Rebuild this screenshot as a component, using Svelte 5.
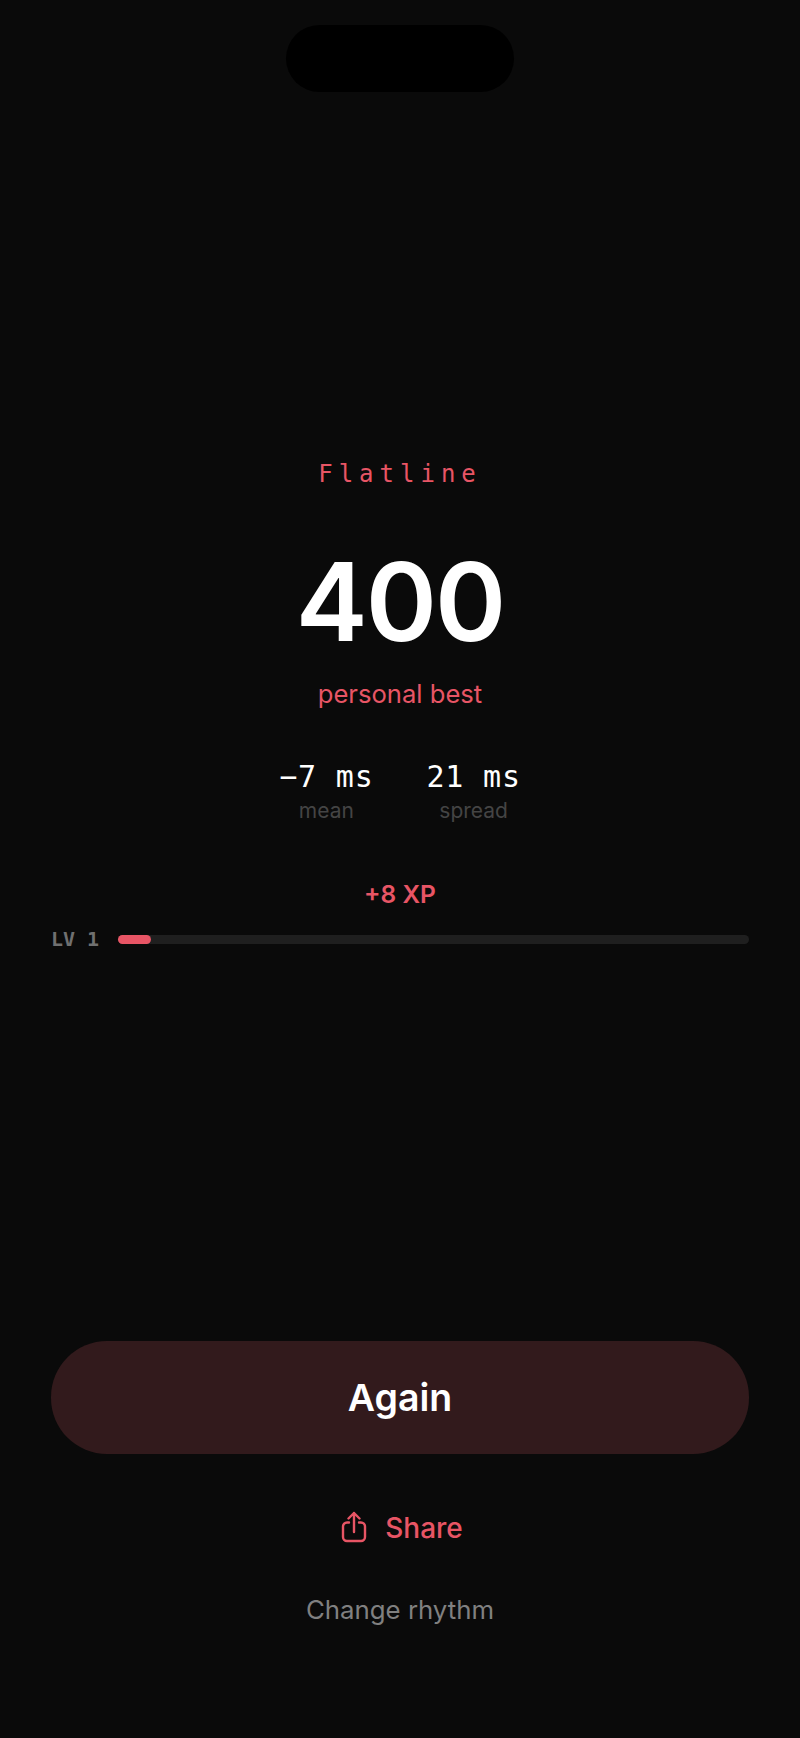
<script>
	const stats = [
		{ value: "−7 ms", label: "mean" },
		{ value: "21 ms", label: "spread" },
	];
	let xp = 8;
	let level = 1;
	let progress = 5.2;
</script>

<div class="screen">
	<div class="island"></div>

	<section class="result">
		<h2 class="rhythm">Flatline</h2>
		<div class="score">400</div>
		<p class="best">personal best</p>

		<div class="stats">
			{#each stats as { value, label } (label)}
				<div class="stat">
					<span class="value">{value}</span>
					<span class="label">{label}</span>
				</div>
			{/each}
		</div>

		<div class="xp">+{xp} XP</div>
		<div class="level">
			<span class="lv">LV {level}</span>
			<div class="track"><div class="fill" style="width: {progress}%"></div></div>
		</div>
	</section>

	<footer class="actions">
		<button class="again">Again</button>
		<button class="share">
			<svg class="icon" viewBox="0 0 26 32" fill="none" stroke="currentColor" stroke-width="2.4" stroke-linecap="round" stroke-linejoin="round">
				<path d="M8 11.500H6a4 4 0 0 0-4 4V26a4 4 0 0 0 4 4h14a4 4 0 0 0 4-4V15.500a4 4 0 0 0-4-4h-2" />
				<path d="M13 21V2M7.500 7.500 13 2l5.500 5.500" />
			</svg>
			<span>Share</span>
		</button>
		<button class="change">Change rhythm</button>
	</footer>
</div>

<style>
	:global(body) {
		background: #0a0a0a;
	}
	.screen {
		position: relative;
		display: flex;
		flex-direction: column;
		height: 1738px;
		box-sizing: border-box;
		padding: 0 51px;
		background: #0a0a0a;
		color: #fff;
		font-family: Inter, "Noto Sans", sans-serif;
		overflow: hidden;
	}
	.island {
		position: absolute;
		top: 25px;
		left: 286px;
		width: 228px;
		height: 67px;
		border-radius: 34px;
		background: #000;
	}
	.result {
		display: flex;
		flex-direction: column;
		align-items: center;
		padding-top: 458px;
	}
	.rhythm {
		margin: 0;
		font-family: "DejaVu Sans Mono", monospace;
		font-size: 24px;
		line-height: 32px;
		font-weight: 400;
		letter-spacing: 6px;
		color: #e85565;
	}
	.score {
		margin-top: 47px;
		font-size: 108px;
		line-height: 130px;
		font-weight: 600;
		letter-spacing: -2px;
	}
	.best {
		margin: 11px 0 0;
		font-size: 25.6px;
		line-height: 32px;
		color: #e85565;
	}
	.stats {
		display: flex;
		gap: 53px;
		margin-top: 49px;
	}
	.stat {
		display: flex;
		flex-direction: column;
		align-items: center;
		gap: 2px;
	}
	.value {
		font-family: "DejaVu Sans Mono", monospace;
		font-size: 30px;
		line-height: 36px;
		letter-spacing: 0.8px;
		color: #fff;
	}
	.label {
		font-size: 21px;
		line-height: 28px;
		color: #444;
	}
	.xp {
		margin-top: 53px;
		font-size: 24.500px;
		line-height: 32px;
		font-weight: 600;
		color: #e85565;
	}
	.level {
		align-self: stretch;
		display: flex;
		align-items: center;
		gap: 19px;
		margin-top: 17px;
	}
	.lv {
		font-family: "DejaVu Sans Mono", monospace;
		font-size: 20px;
		font-weight: 700;
		color: #707070;
		white-space: nowrap;
	}
	.track {
		flex: 1;
		height: 9px;
		border-radius: 5px;
		background: #1f1f1f;
	}
	.fill {
		height: 100%;
		border-radius: 5px;
		background: #e85565;
	}
	.actions {
		margin-top: auto;
		display: flex;
		flex-direction: column;
		align-items: center;
		padding-bottom: 112px;
	}
	button {
		border: none;
		background: none;
		font-family: inherit;
		padding: 0;
	}
	.again {
		width: 100%;
		height: 113px;
		border-radius: 56px;
		background: #321a1c;
		color: #fff;
		font-size: 37.500px;
		font-weight: 600;
	}
	.share {
		display: flex;
		align-items: center;
		gap: 18px;
		height: 34px;
		margin-top: 57px;
		padding-left: 4px;
		color: #e85565;
		font-size: 28px;
		font-weight: 500;
	}
	.icon {
		width: 26px;
		height: 32px;
		margin-bottom: 3px;
	}
	.change {
		margin-top: 49px;
		color: #808080;
		font-size: 25.800px;
		line-height: 32px;
	}
</style>
